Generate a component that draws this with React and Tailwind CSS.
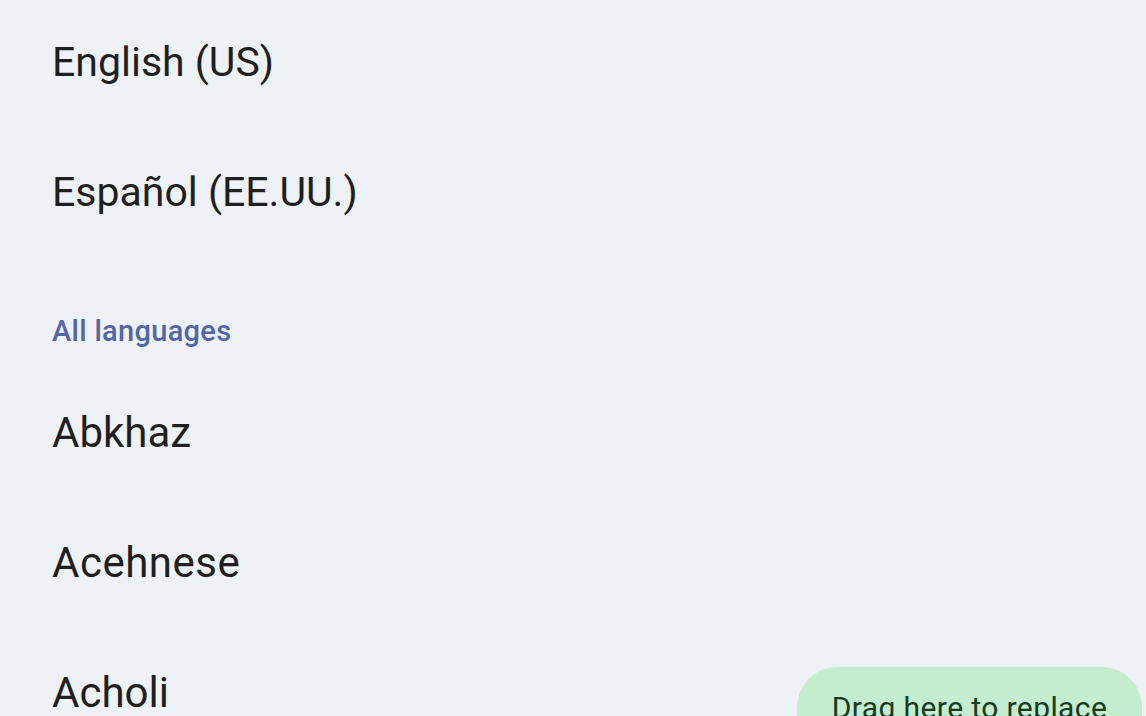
export default function App() {
  const font = { fontFamily: 'Roboto, "Open Sans", sans-serif' };
  return (
    <div className="relative w-[1146px] h-[716px] overflow-hidden bg-[#eef2f7]" style={font}>
      <div className="flex flex-col pl-[52px] mt-[-2px]">
        <div className="h-[130px] flex items-center text-[41px] text-[#1f1f1f]">English (US)</div>
        <div className="h-[130px] flex items-center text-[41px] text-[#1f1f1f]">Español (EE.UU.)</div>
        <div className="h-[109px] flex items-end pb-[18px] text-[29px] tracking-[0.3px] font-medium text-[#5466a6] leading-[36px]">All languages</div>
        <div className="h-[130px] flex items-center text-[42px] text-[#1f1f1f]">Abkhaz</div>
        <div className="h-[130px] flex items-center text-[42px] tracking-[0.5px] text-[#1f1f1f]">Acehnese</div>
        <div className="h-[130px] flex items-center text-[42px] text-[#1f1f1f]">Acholi</div>
      </div>
      <div className="absolute left-[797px] top-[667px] w-[345px] h-[90px] rounded-[40px] bg-[#c4ecce] flex items-start justify-center pt-[18px] text-[30px] tracking-[0.4px] text-[#163a22] whitespace-nowrap">
        Drag here to replace
      </div>
    </div>
  );
}
